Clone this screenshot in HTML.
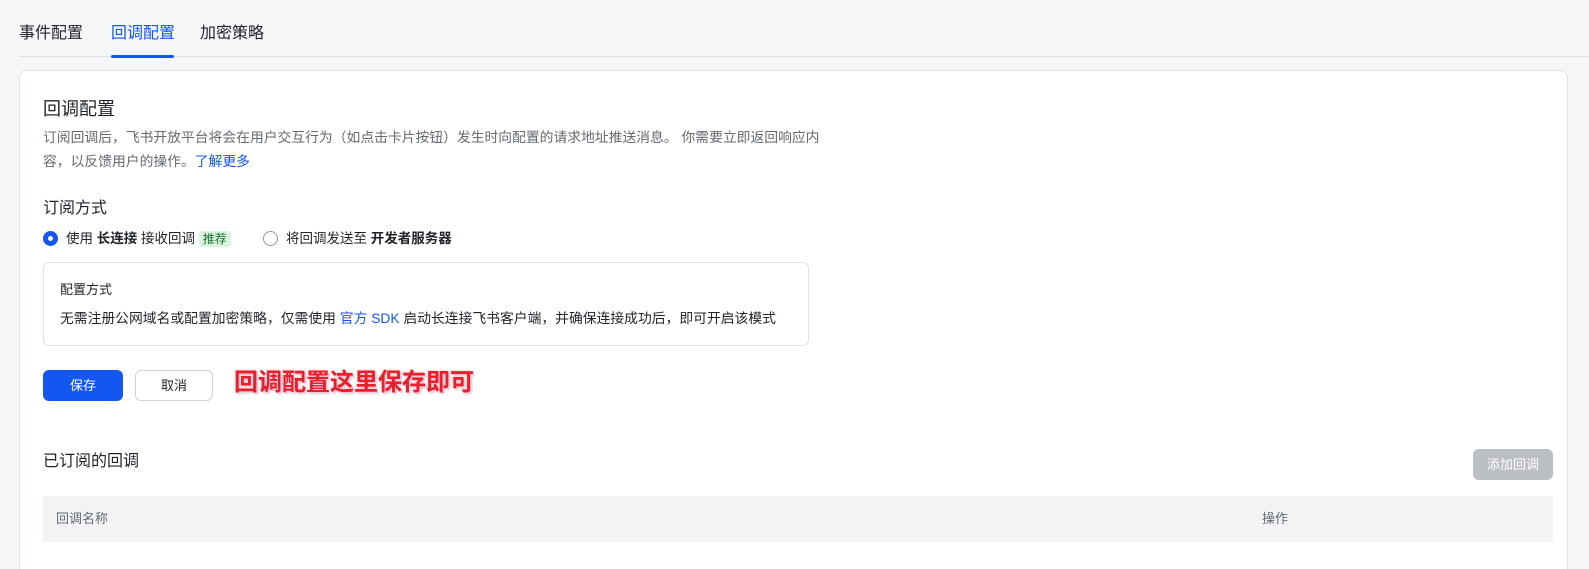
<!DOCTYPE html>
<html><head><meta charset="utf-8"><style>
*{margin:0;padding:0;box-sizing:border-box}
html,body{width:1589px;height:569px;overflow:hidden}
body{background:#f5f6f7;font-family:"Liberation Sans","Noto Sans CJK SC",sans-serif;color:#1f2329;position:relative}
.a{position:absolute;white-space:nowrap}
.tab{font-size:16px;top:23px;line-height:22px}
.card{position:absolute;left:19px;top:70px;width:1549px;height:520px;background:#fff;border:1px solid #dee0e3;border-radius:8px}
.radio{display:inline-block;width:16px;height:16px;border-radius:50%;vertical-align:-3px;margin-right:8px}
</style></head><body>
<div class="a tab" style="left:19px">事件配置</div>
<div class="a tab" style="left:111px;color:#1456f0">回调配置</div>
<div class="a tab" style="left:200px">加密策略</div>
<div class="a" style="left:19px;top:56px;width:1570px;height:1px;background:#dee0e3"></div>
<div class="a" style="left:111px;top:55px;width:63px;height:3px;background:#1456f0;border-radius:2px"></div>
<div class="card"></div>
<div class="a" style="left:43px;top:97px;font-size:18px;line-height:24px">回调配置</div>
<div class="a" style="left:43px;top:126px;font-size:13.8px;line-height:24px;color:#646a73">订阅回调后，飞书开放平台将会在用户交互行为（如点击卡片按钮）发生时向配置的请求地址推送消息。 你需要立即返回响应内<br>容，以反馈用户的操作。<span style="color:#1456f0">了解更多</span></div>
<div class="a" style="left:43px;top:198px;font-size:16px;line-height:22px">订阅方式</div>
<div class="a" style="left:43px;top:229px;font-size:13.5px;line-height:20px"><span class="radio" style="border:5px solid #1456f0;width:15px;height:15px"></span>使用 <b>长连接</b> 接收回调 <span style="background:#d9f5e0;color:#1f6e33;padding:1px 4px;border-radius:3px;font-size:12px">推荐</span></div>
<div class="a" style="left:263px;top:229px;font-size:13.5px;line-height:20px"><span class="radio" style="border:1px solid #8f959e;width:15px;height:15px"></span>将回调发送至 <b>开发者服务器</b></div>
<div class="a" style="left:43px;top:262px;width:766px;height:84px;border:1px solid #dee0e3;border-radius:6px"></div>
<div class="a" style="left:60px;top:280px;font-size:13px;line-height:20px">配置方式</div>
<div class="a" style="left:60px;top:309px;font-size:13.8px;line-height:20px">无需注册公网域名或配置加密策略，仅需使用 <span style="color:#1456f0">官方 SDK</span> 启动长连接飞书客户端，并确保连接成功后，即可开启该模式</div>
<div class="a" style="left:43px;top:370px;width:80px;height:31px;background:#1456f0;border-radius:6px;color:#fff;font-size:13px;line-height:31px;text-align:center">保存</div>
<div class="a" style="left:135px;top:370px;width:78px;height:31px;border:1px solid #d0d3d6;border-radius:6px;font-size:13px;line-height:29px;text-align:center">取消</div>
<div class="a" style="left:234px;top:368px;font-size:24px;line-height:30px;font-weight:bold;color:#e8202a;text-shadow:1px 1px 0 #fbd,-1px -1px 0 #fdd,2px 2px 2px rgba(0,0,0,.2)">回调配置这里保存即可</div>
<div class="a" style="left:43px;top:451px;font-size:16px;line-height:22px">已订阅的回调</div>
<div class="a" style="left:1473px;top:449px;width:80px;height:31px;background:#bbbfc4;border-radius:6px;color:#fff;font-size:13px;line-height:31px;text-align:center">添加回调</div>
<div class="a" style="left:43px;top:496px;width:1510px;height:46px;background:#f2f3f5"></div>
<div class="a" style="left:56px;top:509px;font-size:13px;line-height:20px;color:#646a73">回调名称</div>
<div class="a" style="left:1262px;top:509px;font-size:13px;line-height:20px;color:#646a73">操作</div>
</body></html>
